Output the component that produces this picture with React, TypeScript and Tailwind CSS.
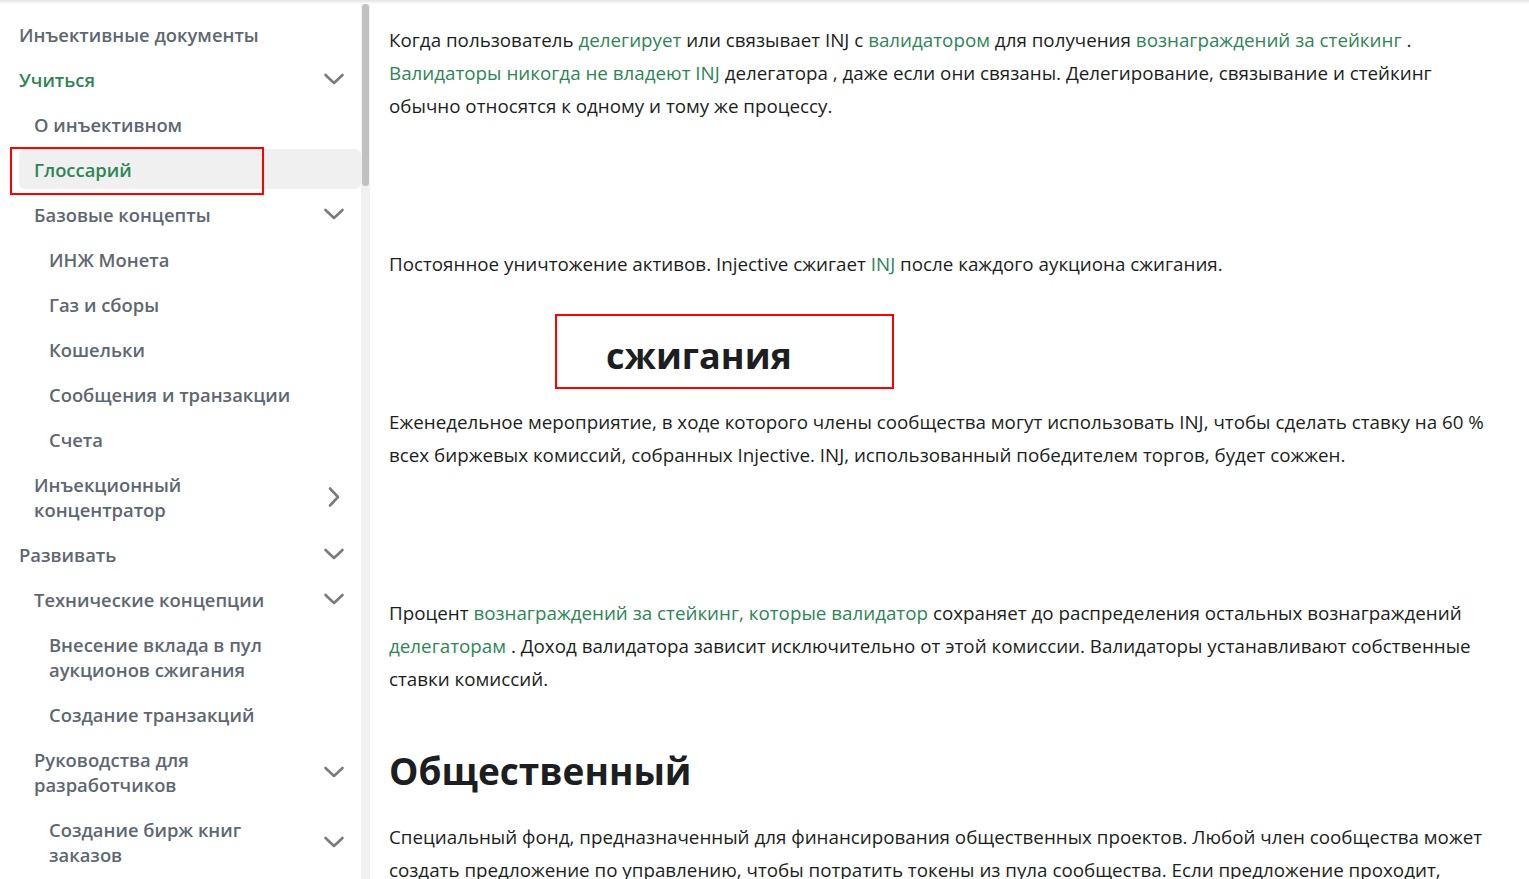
import React from 'react';

const Chevron: React.FC<{ dir?: 'down' | 'right' }> = ({ dir = 'down' }) =>
  dir === 'down' ? (
    <svg width="22" height="14" viewBox="0 0 22 14" className="shrink-0">
      <polyline points="2.5,3 11,11 19.5,3" fill="none" stroke="#7b7b7b" strokeWidth="2.6" strokeLinecap="round" strokeLinejoin="round" />
    </svg>
  ) : (
    <svg width="22" height="22" viewBox="0 0 22 22" className="shrink-0">
      <polyline points="7,2.5 15,11 7,19.5" fill="none" stroke="#7b7b7b" strokeWidth="2.6" strokeLinecap="round" strokeLinejoin="round" />
    </svg>
  );

type Item = { label: React.ReactNode; level: number; chevron?: 'down' | 'right'; active?: boolean; green?: boolean; boxed?: boolean };

const items: Item[] = [
  { label: 'Инъективные документы', level: 1 },
  { label: 'Учиться', level: 1, chevron: 'down', green: true },
  { label: 'О инъективном', level: 2 },
  { label: 'Глоссарий', level: 2, active: true, green: true, boxed: true },
  { label: 'Базовые концепты', level: 2, chevron: 'down' },
  { label: 'ИНЖ Монета', level: 3 },
  { label: 'Газ и сборы', level: 3 },
  { label: 'Кошельки', level: 3 },
  { label: 'Сообщения и транзакции', level: 3 },
  { label: 'Счета', level: 3 },
  { label: <>Инъекционный<br />концентратор</>, level: 2, chevron: 'right' },
  { label: 'Развивать', level: 1, chevron: 'down' },
  { label: 'Технические концепции', level: 2, chevron: 'down' },
  { label: <>Внесение вклада в пул<br />аукционов сжигания</>, level: 3 },
  { label: 'Создание транзакций', level: 3 },
  { label: <>Руководства для<br />разработчиков</>, level: 2, chevron: 'down' },
  { label: <>Создание бирж книг<br />заказов</>, level: 3, chevron: 'down' },
];

const A: React.FC<{ children: React.ReactNode }> = ({ children }) => (
  <span className="text-[#2e8555]">{children}</span>
);

export default function App() {
  return (
    <div className="relative h-[879px] w-[1529px] overflow-hidden bg-white font-['Open_Sans','Noto_Sans',sans-serif]">
      <div className="absolute left-0 right-0 top-0 z-20 h-[4px] bg-gradient-to-b from-[#e3e3e3] to-white" />
      <div className="flex h-full">
        <aside className="w-[361px] shrink-0 pt-[14px]">
          <ul className="flex flex-col">
            {items.map((it, i) => (
              <li key={i} className="relative mt-[5px] first:mt-0">
                <div
                  className={`flex items-center justify-between rounded-[6px] py-[7.5px] pr-[16px] text-[18.4px] font-semibold leading-[25px] ${
                    it.level === 1 ? 'ml-0 pl-[19px]' : it.level === 2 ? 'ml-[19px] pl-[15px]' : 'ml-[19px] pl-[30px]'
                  } ${it.active ? 'bg-[#f0f0f0]' : ''} ${it.green ? 'text-[#2e8555]' : 'text-[#606770]'}`}
                >
                  <span>{it.label}</span>
                  {it.chevron && <Chevron dir={it.chevron} />}
                </div>
                {it.boxed && (
                  <div className="pointer-events-none absolute left-[10px] top-[-2px] h-[48px] w-[254px] border-2 border-[#ff0000]" />
                )}
              </li>
            ))}
          </ul>
        </aside>
        <div className="relative w-[9px] shrink-0 bg-[#f1f1f1]">
          <div className="absolute left-[1px] top-[4px] h-[182px] w-[7px] rounded-[4px] bg-[#c1c1c1]" />
        </div>
        <main className="flex-1 whitespace-nowrap pl-[19px] pt-[24px] text-[18.8px] leading-[33px] text-[#1c1e21]">
          <p>
            Когда пользователь <A>делегирует</A> или связывает INJ с <A>валидатором</A> для получения{' '}
            <A>вознаграждений за стейкинг</A> .
            <br />
            <A>Валидаторы никогда не владеют INJ</A> делегатора , даже если они связаны. Делегирование, связывание и стейкинг
            <br />
            обычно относятся к одному и тому же процессу.
          </p>
          <p className="mt-[125px]">
            Постоянное уничтожение активов. Injective сжигает <A>INJ</A> после каждого аукциона сжигания.
          </p>
          <div className="ml-[166px] mt-[33px] flex h-[75px] w-[339px] items-center border-2 border-[#ff0000] pl-[49px] pt-[8px]">
            <h3 className="text-[36px] font-bold leading-[40px] text-[#1c1e21]">сжигания</h3>
          </div>
          <p className="mt-[17px]">
            Еженедельное мероприятие, в ходе которого члены сообщества могут использовать INJ, чтобы сделать ставку на 60 %
            <br />
            всех биржевых комиссий, собранных Injective. INJ, использованный победителем торгов, будет сожжен.
          </p>
          <p className="mt-[125px]">
            Процент <A>вознаграждений за стейкинг, которые валидатор</A> сохраняет до распределения остальных вознаграждений
            <br />
            <A>делегаторам</A> . Доход валидатора зависит исключительно от этой комиссии. Валидаторы устанавливают собственные
            <br />
            ставки комиссий.
          </p>
          <h2 className="mt-[50px] text-[37px] font-bold leading-[50px] text-[#1c1e21]">Общественный</h2>
          <p className="mt-[25px]">
            Специальный фонд, предназначенный для финансирования общественных проектов. Любой член сообщества может
            <br />
            создать предложение по управлению, чтобы потратить токены из пула сообщества. Если предложение проходит,
          </p>
        </main>
      </div>
    </div>
  );
}
